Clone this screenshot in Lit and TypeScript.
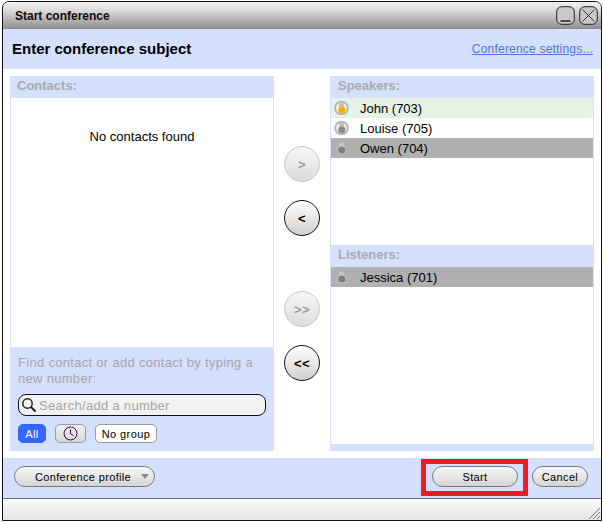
import { LitElement, html, css, svg } from "lit";
import { customElement } from "lit/decorators.js";

const statusIcon = (color: string, ring: boolean) => html`<svg class="ico" width="16" height="16" viewBox="0 0 16 16">
  ${ring ? svg`<circle cx="7.5" cy="8" r="6.4" fill="#ececec" stroke="#b4b4b4" stroke-width="1.8"/>` : svg`<circle cx="7.5" cy="10" r="5" fill="#bdbdbd"/>`}
  <circle cx="7.5" cy="5" r="2.5" fill=${ring ? "#c0c0c0" : "#c6c6c6"}/>
  <circle cx="7.8" cy="10" r="3.6" fill=${color}/>
</svg>`;

@customElement("app-root")
export class AppRoot extends LitElement {
  static styles = css`
    :host { display: block; width: 604px; height: 522px; background: #fff; font-family: "Liberation Sans", Arial, sans-serif; color: #000; padding: 1px 2px 1px 2px; box-sizing: border-box; }
    .win { position: relative; height: 520px; box-sizing: border-box; border: 1.5px solid #111; border-radius: 7px 7px 0 0; display: flex; flex-direction: column; overflow: hidden; background: #fff; }
    .title { height: 27px; flex: none; display: flex; align-items: center; justify-content: space-between; padding: 0 3px 0 12px; background: linear-gradient(#f0f0f0, #e0e0e0 25%, #8e8e8e); box-sizing: border-box; }
    .title b { font-size: 12px; color: #0c0c0c; }
    .ctl { display: flex; gap: 4px; }
    .ctl svg { display: block; }
    .head { height: 40px; flex: none; background: #d5dffe; display: flex; align-items: center; justify-content: space-between; padding: 0 8px 1px 9px; box-sizing: border-box; }
    .head b { font-size: 15px; }
    .head a { font-size: 12px; color: #4a75ee; text-decoration: underline; letter-spacing: .2px; }
    .main { flex: 1; display: flex; padding: 7px 6px 7px 7px; min-height: 0; }
    .panel { width: 264px; flex: none; display: flex; flex-direction: column; background: #d5dffe; min-height: 0; }
    .label { height: 22px; flex: none; display: flex; align-items: center; padding: 0 0 4px 7px; font-size: 13px; font-weight: bold; color: #aaa; box-sizing: border-box; }
    .label.r { padding-left: 8px; }
    .list { background: #fff; margin: 0 1px; }
    .contacts { flex: 1; text-align: center; font-size: 13px; padding-top: 32px; box-sizing: border-box; line-height: 14px; }
    .find { flex: none; height: 104px; padding: 8px 8px 0; box-sizing: border-box; }
    .find p { margin: 0; font-size: 13px; line-height: 16px; color: #a6a6a6; letter-spacing: .3px; }
    .search { margin-top: 7px; height: 22px; box-sizing: border-box; border: 1px solid #111; border-radius: 8px; background: #f2f2f2; display: flex; align-items: center; gap: 2px; padding-left: 2px; font-size: 13px; color: #a6a6a6; letter-spacing: .3px; }
    .filters { margin-top: 8px; display: flex; gap: 9px; }
    .chip { height: 19px; box-sizing: border-box; border-radius: 5px; border: 1px solid #9a9a9a; display: flex; align-items: center; justify-content: center; font-size: 11px; letter-spacing: .4px; }
    .all { width: 28px; background: #3366ff; border-color: #3366ff; color: #fff; }
    .clock { width: 31px; background: linear-gradient(#f2f2f2, #d6d6d6); }
    .nogroup { width: 62px; background: #fff; }
    .mid { width: 56px; flex: none; display: flex; flex-direction: column; align-items: center; padding-top: 70px; box-sizing: border-box; }
    .round { width: 36px; height: 36px; flex: none; box-sizing: border-box; border-radius: 50%; border: 1px solid #111; background: linear-gradient(#fff, #d0d0d0); display: flex; align-items: center; justify-content: center; font-size: 13px; font-weight: bold; letter-spacing: .5px; }
    .round.off { border-color: #c6c6c6; background: linear-gradient(#f6f6f6, #dcdcdc); color: #9a9a9a; }
    .gap18 { margin-top: 18px; }
    .gap55 { margin-top: 55px; }
    .speakers { height: 147px; flex: none; }
    .listeners { flex: 1; }
    .bottomstrip { height: 7px; flex: none; }
    .row { height: 20px; display: flex; align-items: center; padding-left: 3px; gap: 10px; font-size: 13px; box-sizing: border-box; }
    .ico { flex: none; }
    .green { background: #e5f2e5; }
    .sel { background: #b0b0b0; }
    .foot { height: 41px; flex: none; background: #d5dffe; border-bottom: 1px solid #6a6a6a; display: flex; align-items: center; padding: 0 13px 3px 11px; box-sizing: border-box; gap: 14px; }
    .btn { height: 21px; box-sizing: border-box; border: 1px solid #777; border-radius: 11px; background: linear-gradient(#f8f8f8, #d4d4d4); display: flex; align-items: center; justify-content: center; font-size: 11px; letter-spacing: .35px; }
    .profile { width: 141px; gap: 10px; margin-right: auto; padding-left: 15px; }
    .start { width: 86px; }
    .cancel { width: 56px; }
    .status { height: 21px; flex: none; background: linear-gradient(#fafafa, #e4e4e4); position: relative; }
    .grip { position: absolute; right: 1px; bottom: 1px; display: block; }
    .red { position: absolute; left: 417.5px; top: 456.5px; width: 107px; height: 37px; box-sizing: border-box; border: 5px solid #ed1c24; }
  `;

  render() {
    return html`<div class="win">
      <div class="title"><b>Start conference</b>
        <div class="ctl">
          <svg width="19" height="19" viewBox="0 0 19 19"><rect x=".7" y=".7" width="17.6" height="17.6" rx="5" fill="#c8c8c8" stroke="#222" stroke-width="1"/><path d="M4.5 15h10" stroke="#222" stroke-width="1.6"/></svg>
          <svg width="19" height="19" viewBox="0 0 19 19"><rect x=".7" y=".7" width="17.6" height="17.6" rx="5" fill="#c8c8c8" stroke="#222" stroke-width="1"/><path d="M3.5 3.5l12 12M15.5 3.5l-12 12" stroke="#333" stroke-width="1"/></svg>
        </div>
      </div>
      <div class="head"><b>Enter conference subject</b><a>Conference settings...</a></div>
      <div class="main">
        <div class="panel">
          <div class="label">Contacts:</div>
          <div class="list contacts">No contacts found</div>
          <div class="find">
            <p>Find contact or add contact by typing a new number:</p>
            <div class="search">
              <svg width="16" height="16" viewBox="0 0 16 16"><circle cx="6.5" cy="6.5" r="4.7" fill="none" stroke="#222" stroke-width="1.5"/><path d="M10 10l4.5 4.5" stroke="#222" stroke-width="2"/></svg>
              Search/add a number
            </div>
            <div class="filters">
              <div class="chip all">All</div>
              <div class="chip clock"><svg width="15" height="15" viewBox="0 0 15 15"><circle cx="7.5" cy="7.5" r="6.5" fill="none" stroke="#301040" stroke-width="1"/><path d="M7.5 3.5v4.2l3 1.8" fill="none" stroke="#301040" stroke-width="1"/></svg></div>
              <div class="chip nogroup">No group</div>
            </div>
          </div>
        </div>
        <div class="mid">
          <div class="round off">&gt;</div>
          <div class="round gap18">&lt;</div>
          <div class="round off gap55">&gt;&gt;</div>
          <div class="round gap18">&lt;&lt;</div>
        </div>
        <div class="panel">
          <div class="label r">Speakers:</div>
          <div class="list speakers">
            <div class="row green">${statusIcon("#ffb000", true)}<span>John (703)</span></div>
            <div class="row">${statusIcon("#8c8c8c", true)}<span>Louise (705)</span></div>
            <div class="row sel">${statusIcon("#808080", false)}<span>Owen (704)</span></div>
          </div>
          <div class="label r">Listeners:</div>
          <div class="list listeners">
            <div class="row sel">${statusIcon("#808080", false)}<span>Jessica (701)</span></div>
          </div>
          <div class="bottomstrip"></div>
        </div>
      </div>
      <div class="foot">
        <div class="btn profile">Conference profile <svg width="8" height="5" viewBox="0 0 8 5"><path d="M0 0h8L4 5z" fill="#888"/></svg></div>
        <div class="btn start">Start</div>
        <div class="btn cancel">Cancel</div>
      </div>
      <div class="status">
        <svg class="grip" width="12" height="12" viewBox="0 0 12 12"><path d="M1 12L12 1M5 12l7-7M9 12l3-3" stroke="#777" stroke-width="1"/></svg>
      </div>
      <div class="red"></div>
    </div>`;
  }
}
